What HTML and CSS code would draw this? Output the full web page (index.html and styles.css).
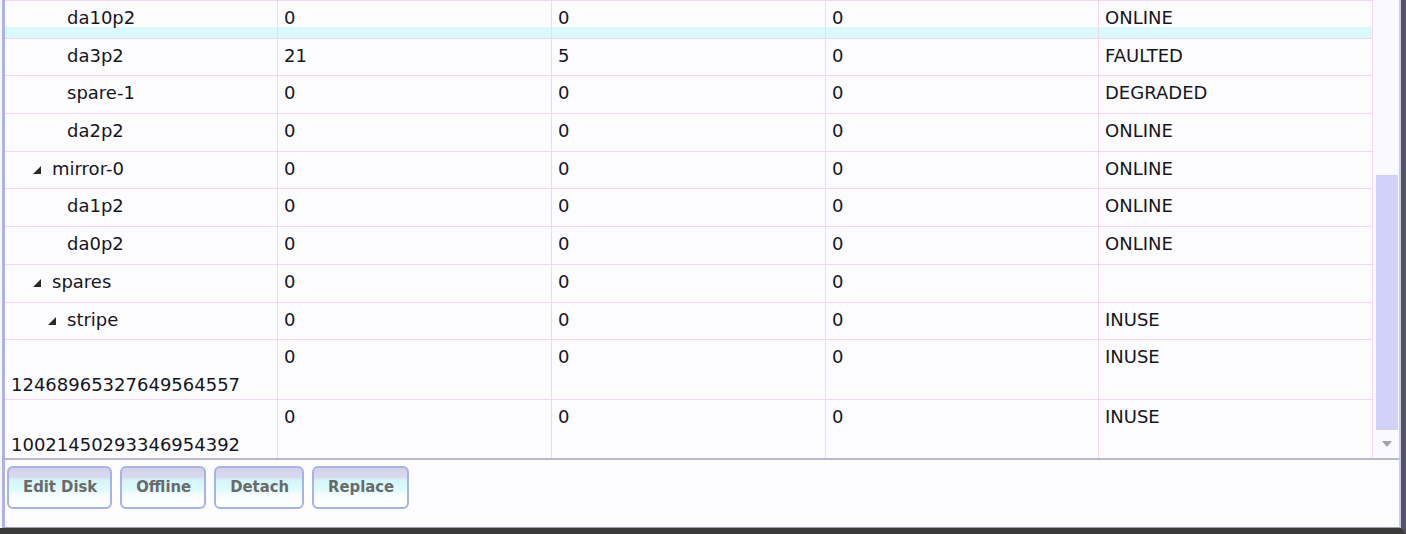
FILE: index.html
```html
<!DOCTYPE html>
<html lang="en">
<head>
    <meta charset="UTF-8">
    <title>Pool Disks</title>
    <link rel="stylesheet" href="styles.css">
</head>
<body>

    <!-- POOL WINDOW -->
    <div class="window">
        <div class="panel">

            <!-- DISK TREE -->
            <div class="grid">
                <div class="rows">
                    <div class="row hl">
                        <div class="cell"><span class="indent lvl2"></span><span class="toggle"></span>da10p2</div>
                        <div class="cell">0</div>
                        <div class="cell">0</div>
                        <div class="cell">0</div>
                        <div class="cell">ONLINE</div>
                    </div>
                    <div class="row">
                        <div class="cell"><span class="indent lvl2"></span><span class="toggle"></span>da3p2</div>
                        <div class="cell">21</div>
                        <div class="cell">5</div>
                        <div class="cell">0</div>
                        <div class="cell">FAULTED</div>
                    </div>
                    <div class="row">
                        <div class="cell"><span class="indent lvl2"></span><span class="toggle"></span>spare-1</div>
                        <div class="cell">0</div>
                        <div class="cell">0</div>
                        <div class="cell">0</div>
                        <div class="cell">DEGRADED</div>
                    </div>
                    <div class="row">
                        <div class="cell"><span class="indent lvl2"></span><span class="toggle"></span>da2p2</div>
                        <div class="cell">0</div>
                        <div class="cell">0</div>
                        <div class="cell">0</div>
                        <div class="cell">ONLINE</div>
                    </div>
                    <div class="row">
                        <div class="cell"><span class="indent lvl1"></span><span class="toggle open"></span>mirror-0</div>
                        <div class="cell">0</div>
                        <div class="cell">0</div>
                        <div class="cell">0</div>
                        <div class="cell">ONLINE</div>
                    </div>
                    <div class="row">
                        <div class="cell"><span class="indent lvl2"></span><span class="toggle"></span>da1p2</div>
                        <div class="cell">0</div>
                        <div class="cell">0</div>
                        <div class="cell">0</div>
                        <div class="cell">ONLINE</div>
                    </div>
                    <div class="row">
                        <div class="cell"><span class="indent lvl2"></span><span class="toggle"></span>da0p2</div>
                        <div class="cell">0</div>
                        <div class="cell">0</div>
                        <div class="cell">0</div>
                        <div class="cell">ONLINE</div>
                    </div>
                    <div class="row">
                        <div class="cell"><span class="indent lvl1"></span><span class="toggle open"></span>spares</div>
                        <div class="cell">0</div>
                        <div class="cell">0</div>
                        <div class="cell">0</div>
                        <div class="cell"></div>
                    </div>
                    <div class="row">
                        <div class="cell"><span class="indent lvl2"></span><span class="toggle open"></span>stripe</div>
                        <div class="cell">0</div>
                        <div class="cell">0</div>
                        <div class="cell">0</div>
                        <div class="cell">INUSE</div>
                    </div>
                    <div class="row">
                        <div class="cell"><span class="indent lvl3"></span><span class="toggle"></span>12468965327649564557</div>
                        <div class="cell">0</div>
                        <div class="cell">0</div>
                        <div class="cell">0</div>
                        <div class="cell">INUSE</div>
                    </div>
                    <div class="row">
                        <div class="cell"><span class="indent lvl3"></span><span class="toggle"></span>10021450293346954392</div>
                        <div class="cell">0</div>
                        <div class="cell">0</div>
                        <div class="cell">0</div>
                        <div class="cell">INUSE</div>
                    </div>
                </div>

                <div class="vscroll">
                    <div class="thumb"></div>
                    <div class="arrow-down"></div>
                </div>
            </div>

            <!-- DISK ACTIONS -->
            <div class="actions">
                <button>Edit Disk</button>
                <button>Offline</button>
                <button>Detach</button>
                <button>Replace</button>
            </div>

        </div>
    </div>

</body>
</html>
```

FILE: styles.css
```css
/* pool disk window */
* {
    padding: 0;
    margin: 0;
}
body {
    background-color: #3a3a3a;
    font-family: "DejaVu Sans", Verdana, sans-serif;
}
.window {
    width: 1406px;
    height: 534px;
    box-sizing: border-box;
    border-right: 5px solid #545466;
    border-bottom: 6px solid #3a3a3a;
    background-color: #f6f6fe;
    display: flex;
}
.panel {
    flex: 1;
    margin-left: 2px;
    border-left: 3px solid #b2b2e2;
    border-right: 2px solid #cacaf2;
    border-bottom: 1px solid #9c9cae;
    background-color: #fcfcff;
    display: flex;
    flex-direction: column;
}

/* tree grid */
.grid {
    display: flex;
    height: 458px;
    border-bottom: 2px solid #b8b8c8;
    overflow: hidden;
}
.rows {
    width: 1368px;
    border-top: 1px solid #f2d6f2;
}
.row {
    display: grid;
    grid-template-columns: 273px 274px 274px 273px 274px;
    min-height: 37.7px;
    box-sizing: border-box;
    border-bottom: 1px solid #f2d6f2;
}
.row.hl {
    background: linear-gradient(to bottom, transparent 26px, #d9f9fd 26px);
}
.cell {
    border-right: 1px solid #f2d6f2;
    padding: 3px 6px 0 6px;
    font-size: 18px;
    line-height: 28px;
    color: #16161c;
}
.indent {
    display: inline-block;
}
.lvl1 {
    width: 22px;
}
.lvl2 {
    width: 37px;
}
.lvl3 {
    width: 52px;
}
.toggle {
    display: inline-block;
    width: 19px;
    height: 7px;
}
.toggle.open {
    width: 0;
    height: 0;
    border-left: 8px solid transparent;
    border-bottom: 8px solid #2b2b22;
    margin-right: 11px;
    vertical-align: 1px;
}

/* scrollbar */
.vscroll {
    width: 26px;
    background-color: #f9f9ff;
    display: flex;
    flex-direction: column;
}
.thumb {
    margin: 175px 1px 0 3px;
    height: 255px;
    background-color: #d2d2f8;
}
.arrow-down {
    margin: auto 0 11px 9px;
    width: 0;
    height: 0;
    border-left: 5.5px solid transparent;
    border-right: 5.5px solid transparent;
    border-top: 6px solid #a4a4a4;
}

/* buttons */
.actions {
    display: flex;
    gap: 8px;
    padding: 6px 0 0 2px;
}
button {
    height: 43px;
    padding: 0 13px 3px 14px;
    border: 2px solid #a8b2ea;
    border-radius: 6px;
    background: linear-gradient(to bottom, #d2d2e8 0%, #d8d8ee 22%, #d4f6fb 32%, #e0fafd 58%, #f8fcff 70%, #ffffff 100%);
    font-family: "DejaVu Sans Condensed", "DejaVu Sans", sans-serif;
    font-stretch: condensed;
    font-weight: bold;
    font-size: 16.5px;
    color: #6a6a6a;
    cursor: pointer;
}
button:hover {
    background: linear-gradient(to bottom, #c8c8e4 0%, #d0f0f8 40%, #ffffff 100%);
}
```
